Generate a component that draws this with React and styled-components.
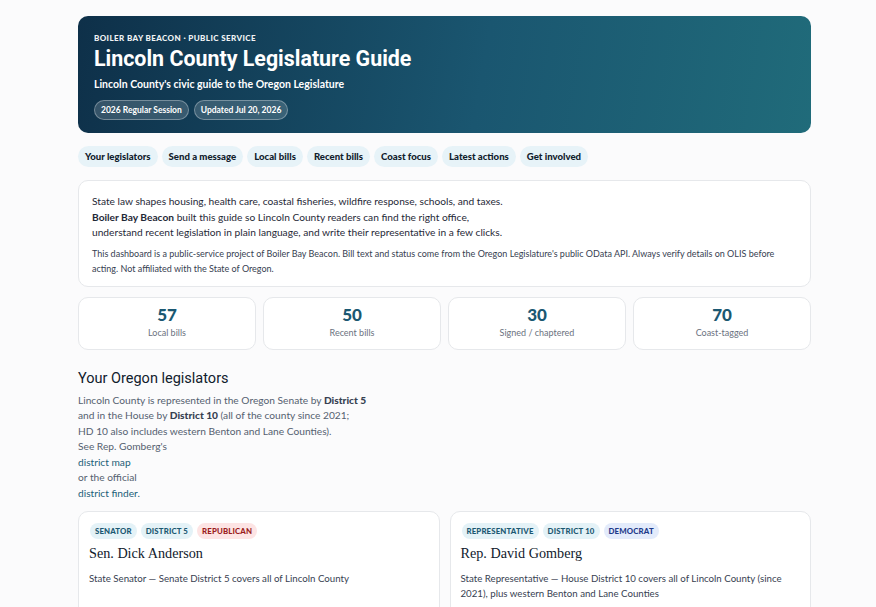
import React from "react";
import styled, { createGlobalStyle } from "styled-components";

const GlobalStyle = createGlobalStyle`
  * { box-sizing: border-box; }
  html, body { margin: 0; padding: 0; background: #fbfbfc; }
  body {
    font-family: Lato, "Noto Sans", sans-serif;
    color: #1f2937;
  }
`;

const Page = styled.main`
  width: 733px;
  margin: 0 0 0 78px;
  padding: 16px 0 24px;
  display: flex;
  flex-direction: column;
`;

const Hero = styled.header`
  border-radius: 10px;
  background: linear-gradient(100deg, #0e3049 0%, #1a5670 55%, #206b7a 100%);
  color: #fff;
  padding: 17px 16px 13px;
  height: 117px;
`;

const Kicker = styled.div`
  font-size: 8px;
  font-weight: 900;
  letter-spacing: 0.05em;
  text-transform: uppercase;
  opacity: 0.94;
`;

const Title = styled.h1`
  font-family: Roboto, "Noto Sans", sans-serif;
  font-size: 21.4px;
  font-weight: 700;
  margin: 2px 0 0;
  line-height: 28px;
`;

const Subtitle = styled.p`
  margin: 5px 0 0;
  font-size: 10.5px;
  font-weight: 700;
`;

const PillRow = styled.div`
  display: flex;
  gap: 5px;
  margin-top: 10px;
`;

const HeroPill = styled.span`
  font-size: 8.5px;
  font-weight: 700;
  padding: 0 6px;
  height: 20px;
  display: inline-flex;
  align-items: center;
  border-radius: 10px;
  background: rgba(255, 255, 255, 0.16);
  border: 1px solid rgba(255, 255, 255, 0.32);
`;

const Nav = styled.nav`
  display: flex;
  gap: 4px;
  margin-top: 13px;
`;

const NavChip = styled.a`
  font-size: 9.6px;
  font-weight: 900;
  color: #10202c;
  background: #e7f3f8;
  border-radius: 11px;
  height: 21px;
  padding: 0 7px;
  display: inline-flex;
  align-items: center;
  text-decoration: none;
`;

const Card = styled.section`
  background: #fff;
  border: 1px solid #e6e8eb;
  border-radius: 10px;
`;

const Intro = styled(Card)`
  margin-top: 13px;
  padding: 13px 13px 10px;
`;

const IntroText = styled.p`
  margin: 0;
  font-size: 10.2px;
  line-height: 15.5px;
  color: #1f2937;
`;

const Fine = styled.p`
  margin: 5px 0 0;
  font-size: 9px;
  line-height: 15px;
  color: #374151;
`;

const Stats = styled.div`
  display: grid;
  grid-template-columns: repeat(4, 1fr);
  gap: 7px;
  margin-top: 10px;
`;

const Stat = styled(Card)`
  height: 53px;
  display: flex;
  flex-direction: column;
  align-items: center;
  justify-content: center;
  padding-bottom: 4px;
`;

const StatNum = styled.div`
  font-size: 17px;
  font-weight: 900;
  color: #1b5872;
  line-height: 20px;
`;

const StatLabel = styled.div`
  font-size: 9px;
  color: #6b7280;
  margin-top: 2px;
`;

const SectionTitle = styled.h2`
  font-family: Roboto, "Noto Sans", sans-serif;
  font-weight: 400;
  font-size: 14.5px;
  color: #10202c;
  margin: 19px 0 0;
  line-height: 20px;
`;

const Lede = styled.p`
  margin: 4px 0 0;
  font-size: 10.2px;
  line-height: 15.6px;
  color: #556170;
  strong { color: #374151; font-weight: 900; }
`;

const Link = styled.a`
  display: block;
  color: #1b5e78;
  text-decoration: none;
`;

const Cards = styled.div`
  display: grid;
  grid-template-columns: 1fr 1fr;
  gap: 10px;
  margin-top: 9px;
`;

const PersonCard = styled(Card)`
  padding: 11px 10px 14px;
  min-height: 120px;
`;

const Badges = styled.div`
  display: flex;
  gap: 4px;
  padding-left: 1px;
`;

const tones = {
  teal: { bg: "#e4f2f7", fg: "#1b5872" },
  red: { bg: "#fde4e4", fg: "#9b1c1c" },
  blue: { bg: "#e3ebfb", fg: "#1e3a8a" },
};

const Badge = styled.span`
  font-size: 7.8px;
  font-weight: 900;
  letter-spacing: 0.02em;
  text-transform: uppercase;
  height: 16px;
  padding: 0 5px;
  border-radius: 8px;
  display: inline-flex;
  align-items: center;
  background: ${(p) => tones[p.$tone].bg};
  color: ${(p) => tones[p.$tone].fg};
`;

const Name = styled.h3`
  font-family: "Liberation Serif", "DejaVu Serif", serif;
  font-weight: 400;
  font-size: 14.2px;
  color: #10202c;
  margin: 4px 0 0;
  line-height: 20px;
`;

const Role = styled.p`
  margin: 8px 0 0;
  font-size: 9.7px;
  line-height: 15px;
  color: #374151;
`;

const navItems = [
  "Your legislators",
  "Send a message",
  "Local bills",
  "Recent bills",
  "Coast focus",
  "Latest actions",
  "Get involved",
];

const stats = [
  ["57", "Local bills"],
  ["50", "Recent bills"],
  ["30", "Signed / chaptered"],
  ["70", "Coast-tagged"],
];

const people = [
  {
    badges: [["Senator", "teal"], ["District 5", "teal"], ["Republican", "red"]],
    name: "Sen. Dick Anderson",
    role: "State Senator — Senate District 5 covers all of Lincoln County",
  },
  {
    badges: [["Representative", "teal"], ["District 10", "teal"], ["Democrat", "blue"]],
    name: "Rep. David Gomberg",
    role: "State Representative — House District 10 covers all of Lincoln County (since 2021), plus western Benton and Lane Counties",
  },
];

export default function App() {
  return (
    <>
      <GlobalStyle />
      <Page>
        <Hero>
          <Kicker>Boiler Bay Beacon · Public Service</Kicker>
          <Title>Lincoln County Legislature Guide</Title>
          <Subtitle>Lincoln County's civic guide to the Oregon Legislature</Subtitle>
          <PillRow>
            <HeroPill>2026 Regular Session</HeroPill>
            <HeroPill>Updated Jul 20, 2026</HeroPill>
          </PillRow>
        </Hero>

        <Nav>
          {navItems.map((n) => (
            <NavChip key={n} href="#">{n}</NavChip>
          ))}
        </Nav>

        <Intro>
          <IntroText>
            State law shapes housing, health care, coastal fisheries, wildfire response, schools, and taxes.
            <br />
            <strong>Boiler Bay Beacon</strong> built this guide so Lincoln County readers can find the right office,
            <br />
            understand recent legislation in plain language, and write their representative in a few clicks.
          </IntroText>
          <Fine>
            This dashboard is a public-service project of Boiler Bay Beacon. Bill text and status come from the Oregon
            Legislature's public OData API. Always verify details on OLIS before acting. Not affiliated with the State
            of Oregon.
          </Fine>
        </Intro>

        <Stats>
          {stats.map(([n, l]) => (
            <Stat key={l}>
              <StatNum>{n}</StatNum>
              <StatLabel>{l}</StatLabel>
            </Stat>
          ))}
        </Stats>

        <SectionTitle>Your Oregon legislators</SectionTitle>
        <Lede>
          Lincoln County is represented in the Oregon Senate by <strong>District 5</strong>
          <br />
          and in the House by <strong>District 10</strong> (all of the county since 2021;
          <br />
          HD 10 also includes western Benton and Lane Counties).
          <br />
          See Rep. Gomberg's
          <Link href="#">district map</Link>
          or the official
          <Link href="#">district finder.</Link>
        </Lede>

        <Cards>
          {people.map((p) => (
            <PersonCard key={p.name}>
              <Badges>
                {p.badges.map(([t, tone]) => (
                  <Badge key={t} $tone={tone}>{t}</Badge>
                ))}
              </Badges>
              <Name>{p.name}</Name>
              <Role>{p.role}</Role>
            </PersonCard>
          ))}
        </Cards>
      </Page>
    </>
  );
}
